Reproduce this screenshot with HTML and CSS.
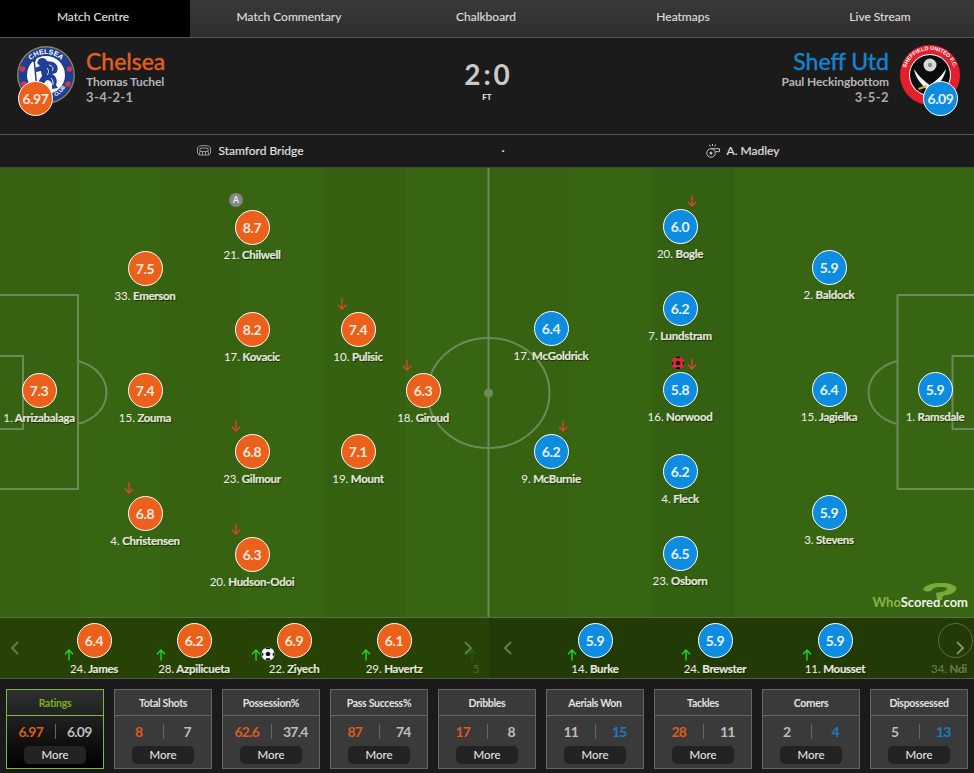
FILE: index.html
```html
<!DOCTYPE html>
<html lang="en">
<head>
<meta charset="utf-8">
<title>Chelsea 2:0 Sheff Utd - Match Centre</title>
<link rel="stylesheet" href="styles.css">
</head>
<body>
<svg class="defs" width="0" height="0" aria-hidden="true">
  <symbol id="down" viewBox="0 0 10 12"><path d="M5 .5V11M1 6.8 5 11l4-4.2" fill="none" stroke="currentColor" stroke-width="1.3"/></symbol>
  <symbol id="up" viewBox="0 0 10 12"><path d="M5 11.5V1M1 5.2 5 1l4 4.2" fill="none" stroke="currentColor" stroke-width="1.4"/></symbol>
  <symbol id="ball" viewBox="0 0 14 14"><circle cx="7" cy="7" r="6.6" fill="currentColor"/><path d="M7 4.4 9.5 6.2 8.5 9.1H5.5L4.5 6.2ZM7 .4V2l-1.8.3L4.5 1ZM7 .4V2l1.8.3L9.5 1ZM.5 6.5 2 5.6l.4 2.4-1.2 1.3ZM13.5 6.5 12 5.6l-.4 2.4 1.2 1.3ZM4.4 12.8l.8-1.6h3.6l.8 1.6L7 13.6Z" fill="#111"/></symbol>
  <symbol id="chev-l" viewBox="0 0 10 14"><path d="M8 1 2 7l6 6" fill="none" stroke="currentColor" stroke-width="2"/></symbol>
  <symbol id="chev-r" viewBox="0 0 10 14"><path d="M2 1l6 6-6 6" fill="none" stroke="currentColor" stroke-width="2"/></symbol>
</svg>

<nav class="tabs">
  <a class="tab tab-active">Match Centre</a>
  <a class="tab">Match Commentary</a>
  <a class="tab">Chalkboard</a>
  <a class="tab">Heatmaps</a>
  <a class="tab">Live Stream</a>
</nav>

<header class="match">
  <div class="team">
    <div class="crest">
      <svg viewBox="0 0 60 60" width="60" height="60">
        <defs><path id="chelsea-arc" d="M9 30a21 21 0 0 1 42 0"/><path id="chelsea-club" d="M20 53a25 25 0 0 0 31-14"/></defs>
        <circle cx="30" cy="30" r="29" fill="#8d8358"/>
        <circle cx="30" cy="30" r="27.600" fill="#1f3f95"/>
        <circle cx="30" cy="30" r="19" fill="#fff"/>
        <text class="crest-text" font-size="7"><textPath href="#chelsea-arc" startOffset="50%" text-anchor="middle">CHELSEA</textPath></text>
        <text class="crest-text" font-size="5"><textPath href="#chelsea-club" startOffset="72%" text-anchor="middle">CLUB</textPath></text>
        <circle cx="6.500" cy="24" r="2.800" fill="#d6324a"/><circle cx="53.500" cy="24" r="2.800" fill="#d6324a"/>
        <circle cx="8" cy="39" r="2.800" fill="#d6324a"/><circle cx="52" cy="39" r="2.800" fill="#d6324a"/>
        <path d="M18 14 21 44" fill="none" stroke="#1f3f95" stroke-width="1.500"/>
        <circle cx="18" cy="15" r="2" fill="#1f3f95"/>
        <path d="M23 14C26 12 30 13 31 16L37 17C42 19 43 25 40 28L36 29C40 31 42 35 40 40L42 43 36 44V39C35 36 33 35 31 35L28 38 30 44H24L22 37 26 31 25 26 20 27 19 23 24 21 21 18Z" fill="#1f3f95"/>
        <path d="M33 20C37 21 38 24 36 26M31 23C33 25 33 28 31 30M35 33C37 35 37 37 37 40" fill="none" stroke="#fff" stroke-width=".9"/>
      </svg>
      <span class="rating rating-home team-rating">6.97</span>
    </div>
    <div class="team-info">
      <h2 class="team-name home-text">Chelsea</h2>
      <div class="manager">Thomas Tuchel</div>
      <div class="formation">3-4-2-1</div>
    </div>
  </div>

  <div class="score">
    <div class="score-value">2 : 0</div>
    <div class="score-status">FT</div>
  </div>

  <div class="team team-away">
    <div class="team-info">
      <h2 class="team-name away-text">Sheff Utd</h2>
      <div class="manager">Paul Heckingbottom</div>
      <div class="formation">3-5-2</div>
    </div>
    <div class="crest">
      <svg viewBox="0 0 60 60" width="60" height="60">
        <defs><path id="sheff-arc" d="M6 36a24.800 24.800 0 1 1 48 0"/></defs>
        <circle cx="30" cy="30" r="30" fill="#e1202c"/>
        <circle cx="30" cy="30" r="21" fill="#fff"/>
        <circle cx="30" cy="30" r="20" fill="#0b0b0b"/>
        <text class="crest-text" font-size="5.500"><textPath href="#sheff-arc" startOffset="50%" text-anchor="middle">SHEFFIELD UNITED F.C.</textPath></text>
        <circle cx="30" cy="20" r="6.500" fill="#d8d8d8"/>
        <circle cx="30" cy="20" r="2.200" fill="#8c8c8c"/>
        <path d="M14 24C15 32 21 39 28 46L32 42C26 37 19 32 14 24ZM46 24C45 32 39 39 32 46L28 42C34 37 41 32 46 24Z" fill="#f2f2f2"/>
        <path d="M18 43l9-3-1 2.500-7 2.500Z" fill="#c9b23a"/>
      </svg>
      <span class="rating rating-away team-rating">6.09</span>
    </div>
  </div>
</header>

<section class="info">
  <div class="info-item">
    <svg class="info-icon" viewBox="0 0 14 11" width="14" height="11"><g fill="none" stroke="#999" stroke-width="1"><path d="M1.500 1.500C4 .3 10 .3 12.500 1.500L13.500 3V8.500L12 10H2L.5 8.500V3Z"/><path d="M3 3.500C5.500 2.800 8.500 2.800 11 3.500V6.500H3ZM3 6.500 2 10M11 6.500 12 10M5.500 6.500V10M8.500 6.500V10"/></g></svg>
    <span>Stamford Bridge</span>
  </div>
  <div class="info-dot">·</div>
  <div class="info-item info-ref">
    <svg class="info-icon" viewBox="0 0 14 14" width="14" height="14"><g fill="none" stroke="#bbb" stroke-width="1"><circle cx="5" cy="9" r="4.300"/><path d="M5 4.700h8.500v3h-4.300"/><path d="M3.500.5l.7 2M6.500 0v2M9.500.5l-.7 2"/></g><circle cx="5" cy="9" r="1.500" fill="#bbb"/></svg>
    <span>A. Madley</span>
  </div>
</section>

<main class="pitch">
  <svg class="pitch-lines" viewBox="0 0 974 449" width="974" height="449">
    <g fill="none" stroke="#6d8a58" stroke-width="2">
      <path d="M488.500 0V449"/>
      <ellipse cx="488.500" cy="225" rx="61" ry="55"/>
      <path d="M-2 127H78V321H-2M-2 188H23V261H-2"/>
      <path d="M78 193C116 203 116 246 78 256"/>
      <path d="M976 127H897.500V321H976M976 188H952.500V261H976"/>
      <path d="M897 193C859 203 859 246 897 256"/>
    </g>
    <circle cx="488.500" cy="225" r="4.500" fill="#6d8a58"/>
  </svg>

  <!-- Chelsea -->
  <div class="pin" style="left:39px;top:223px"><span class="rating rating-home">7.3</span><div class="label"><span class="num">1.</span> Arrizabalaga</div></div>
  <div class="pin" style="left:145px;top:223px"><span class="rating rating-home">7.4</span><div class="label"><span class="num">15.</span> Zouma</div></div>
  <div class="pin" style="left:145px;top:101px"><span class="rating rating-home">7.5</span><div class="label"><span class="num">33.</span> Emerson</div></div>
  <div class="pin" style="left:145px;top:346px"><svg class="mark arrow-down mark-home"><use href="#down"/></svg><span class="rating rating-home">6.8</span><div class="label"><span class="num">4.</span> Christensen</div></div>
  <div class="pin" style="left:252px;top:60px"><span class="captain">A</span><span class="rating rating-home">8.7</span><div class="label"><span class="num">21.</span> Chilwell</div></div>
  <div class="pin" style="left:252px;top:162px"><span class="rating rating-home">8.2</span><div class="label"><span class="num">17.</span> Kovacic</div></div>
  <div class="pin" style="left:252px;top:284px"><svg class="mark arrow-down mark-home"><use href="#down"/></svg><span class="rating rating-home">6.8</span><div class="label"><span class="num">23.</span> Gilmour</div></div>
  <div class="pin" style="left:252px;top:387px"><svg class="mark arrow-down mark-home"><use href="#down"/></svg><span class="rating rating-home">6.3</span><div class="label"><span class="num">20.</span> Hudson-Odoi</div></div>
  <div class="pin" style="left:358px;top:162px"><svg class="mark arrow-down mark-home"><use href="#down"/></svg><span class="rating rating-home">7.4</span><div class="label"><span class="num">10.</span> Pulisic</div></div>
  <div class="pin" style="left:358px;top:284px"><span class="rating rating-home">7.1</span><div class="label"><span class="num">19.</span> Mount</div></div>
  <div class="pin" style="left:423px;top:223px"><svg class="mark arrow-down mark-home"><use href="#down"/></svg><span class="rating rating-home">6.3</span><div class="label"><span class="num">18.</span> Giroud</div></div>

  <!-- Sheffield United -->
  <div class="pin" style="left:551px;top:161px"><span class="rating rating-away">6.4</span><div class="label"><span class="num">17.</span> McGoldrick</div></div>
  <div class="pin" style="left:551px;top:284px"><svg class="mark arrow-down mark-away"><use href="#down"/></svg><span class="rating rating-away">6.2</span><div class="label"><span class="num">9.</span> McBurnie</div></div>
  <div class="pin" style="left:680px;top:59px"><svg class="mark arrow-down mark-away"><use href="#down"/></svg><span class="rating rating-away">6.0</span><div class="label"><span class="num">20.</span> Bogle</div></div>
  <div class="pin" style="left:680px;top:141px"><span class="rating rating-away">6.2</span><div class="label"><span class="num">7.</span> Lundstram</div></div>
  <div class="pin" style="left:680px;top:222px"><svg class="mark ball-red"><use href="#ball"/></svg><svg class="mark arrow-down mark-away"><use href="#down"/></svg><span class="rating rating-away">5.8</span><div class="label"><span class="num">16.</span> Norwood</div></div>
  <div class="pin" style="left:680px;top:304px"><span class="rating rating-away">6.2</span><div class="label"><span class="num">4.</span> Fleck</div></div>
  <div class="pin" style="left:680px;top:386px"><span class="rating rating-away">6.5</span><div class="label"><span class="num">23.</span> Osborn</div></div>
  <div class="pin" style="left:829px;top:100px"><span class="rating rating-away">5.9</span><div class="label"><span class="num">2.</span> Baldock</div></div>
  <div class="pin" style="left:829px;top:222px"><span class="rating rating-away">6.4</span><div class="label"><span class="num">15.</span> Jagielka</div></div>
  <div class="pin" style="left:829px;top:345px"><span class="rating rating-away">5.9</span><div class="label"><span class="num">3.</span> Stevens</div></div>
  <div class="pin" style="left:935px;top:222px"><span class="rating rating-away">5.9</span><div class="label"><span class="num">1.</span> Ramsdale</div></div>

  <div class="brand">
    <svg class="brand-mark" viewBox="0 0 34 17" width="34" height="17"><path d="M0 6C3 1 14-1 22 0 31 1 35 4 33 7 31 11 24 12 20 13L19 17H14L13 10C18 9 24 8 24 6 24 4 20 4 16 4 12 4 9 6 8 8 4 9 0 8 0 6Z" fill="#7aa83c"/></svg>
    <span class="brand-who">Who</span><span>Scored</span><span class="brand-dot">.</span><span>com</span>
  </div>
</main>

<section class="subs">
  <div class="sub-panel sub-panel-home">
    <div class="sub"><svg class="mark arrow-up" style="left:20px"><use href="#up"/></svg><span class="rating rating-home">6.4</span><div class="label"><span class="num">24.</span> James</div></div>
    <div class="sub"><svg class="mark arrow-up" style="left:12px"><use href="#up"/></svg><span class="rating rating-home">6.2</span><div class="label"><span class="num">28.</span> Azpilicueta</div></div>
    <div class="sub"><svg class="mark arrow-up" style="left:7px"><use href="#up"/></svg><svg class="mark ball-white"><use href="#ball"/></svg><span class="rating rating-home">6.9</span><div class="label"><span class="num">22.</span> Ziyech</div></div>
    <div class="sub"><svg class="mark arrow-up" style="left:17px"><use href="#up"/></svg><span class="rating rating-home">6.1</span><div class="label"><span class="num">29.</span> Havertz</div></div>
    <div class="sub-peek"><svg class="mark arrow-up" style="left:0"><use href="#up"/></svg><div class="peek-num">5</div></div>
    <svg class="chevron chevron-1"><use href="#chev-l"/></svg>
    <svg class="chevron chevron-2"><use href="#chev-r"/></svg>
  </div>
  <div class="sub-panel sub-panel-away">
    <div class="sub sub-wide"><svg class="mark arrow-up" style="left:32px"><use href="#up"/></svg><span class="rating rating-away">5.9</span><div class="label"><span class="num">14.</span> Burke</div></div>
    <div class="sub sub-wide"><svg class="mark arrow-up" style="left:26px"><use href="#up"/></svg><span class="rating rating-away">5.9</span><div class="label"><span class="num">24.</span> Brewster</div></div>
    <div class="sub sub-wide"><svg class="mark arrow-up" style="left:27px"><use href="#up"/></svg><span class="rating rating-away">5.9</span><div class="label"><span class="num">11.</span> Mousset</div></div>
    <div class="sub sub-wide sub-empty"><span class="rating rating-none"></span><div class="label label-peek"><span class="num">34.</span> Ndi</div></div>
    <svg class="chevron chevron-3"><use href="#chev-l"/></svg>
    <svg class="chevron chevron-4"><use href="#chev-r"/></svg>
  </div>
</section>

<section class="stats">
  <article class="stat stat-active">
    <h3 class="stat-title">Ratings</h3>
    <div class="stat-values"><span class="home-val">6.97</span><i></i><span>6.09</span></div>
    <button class="more">More</button>
  </article>
  <article class="stat">
    <h3 class="stat-title">Total Shots</h3>
    <div class="stat-values"><span class="home-val">8</span><i></i><span>7</span></div>
    <button class="more">More</button>
  </article>
  <article class="stat">
    <h3 class="stat-title">Possession%</h3>
    <div class="stat-values"><span class="home-val">62.6</span><i></i><span>37.4</span></div>
    <button class="more">More</button>
  </article>
  <article class="stat">
    <h3 class="stat-title">Pass Success%</h3>
    <div class="stat-values"><span class="home-val">87</span><i></i><span>74</span></div>
    <button class="more">More</button>
  </article>
  <article class="stat">
    <h3 class="stat-title">Dribbles</h3>
    <div class="stat-values"><span class="home-val">17</span><i></i><span>8</span></div>
    <button class="more">More</button>
  </article>
  <article class="stat">
    <h3 class="stat-title">Aerials Won</h3>
    <div class="stat-values"><span>11</span><i></i><span class="away-val">15</span></div>
    <button class="more">More</button>
  </article>
  <article class="stat">
    <h3 class="stat-title">Tackles</h3>
    <div class="stat-values"><span class="home-val">28</span><i></i><span>11</span></div>
    <button class="more">More</button>
  </article>
  <article class="stat">
    <h3 class="stat-title">Corners</h3>
    <div class="stat-values"><span>2</span><i></i><span class="away-val">4</span></div>
    <button class="more">More</button>
  </article>
  <article class="stat">
    <h3 class="stat-title">Dispossessed</h3>
    <div class="stat-values"><span>5</span><i></i><span class="away-val">13</span></div>
    <button class="more">More</button>
  </article>
</section>
</body>
</html>
```

FILE: styles.css
```css
* { box-sizing: border-box; }
html, body { margin: 0; padding: 0; }
body {
  width: 974px;
  height: 773px;
  overflow: hidden;
  background: #1a1a1a;
  color: #fff;
  font-family: Lato, "Open Sans", "Liberation Sans", sans-serif;
}
.defs { position: absolute; }

/* Tabs */
.tabs {
  display: grid;
  grid-template-columns: 190px repeat(4, 197px);
  height: 38px;
  background: linear-gradient(#393939, #2e2e2e);
  border-bottom: 1px solid #555;
  overflow: hidden;
}
.tab {
  display: flex;
  align-items: center;
  justify-content: center;
  font-size: 12px;
  color: #ddd;
  padding: 0 0 5px 1px;
  -webkit-text-stroke: .15px currentColor;
}
.tab-active { background: #000; color: #ddd; padding: 0 4px 5px 0; }

/* Match header */
.match {
  display: grid;
  grid-template-columns: 1fr auto 1fr;
  height: 97px;
  background: #1b1b1b;
  border-bottom: 1px solid #555;
}
.team { display: flex; padding: 7px 0 0 16px; gap: 10px; }
.team-away { justify-content: flex-end; padding: 7px 14px 0 0; gap: 11px; }
.team-away .team-info { text-align: right; }
.team-info { padding-top: 3px; }
.crest { position: relative; width: 60px; height: 60px; }
.crest svg { display: block; }
.crest-text { fill: #fff; font-family: "Liberation Sans", sans-serif; font-weight: 700; }
.team-rating { position: absolute; left: 2px; top: 36px; font-size: 12px; letter-spacing: -.8px; }
.team-away .team-rating { left: 23px; top: 36px; }
.team-name {
  margin: 0;
  font-size: 23px;
  line-height: 26px;
  font-weight: 400;
  -webkit-text-stroke: .4px currentColor;
}
.home-text { color: #e4601f; }
.away-text { color: #1684d0; }
.manager {
  font-size: 12px;
  line-height: 15px;
  font-weight: 700;
  color: #b5b5b5;
  letter-spacing: -.1px;
}
.formation {
  font-size: 13px;
  line-height: 17px;
  font-weight: 700;
  color: #aaa;
  letter-spacing: .4px;
}
.score { text-align: center; padding-top: 20px; }
.score-value {
  font-size: 28px;
  line-height: 32px;
  font-weight: 700;
  color: #c9c9c9;
  word-spacing: -4px;
}
.score-status { font-size: 8px; line-height: 9px; font-weight: 700; color: #eee; margin-top: 3px; }

/* Venue and referee */
.info {
  display: grid;
  grid-template-columns: 501px 4px 1fr;
  height: 33px;
  padding-bottom: 1px;
  background: #1b1b1b;
  border-bottom: 1px solid #444;
  align-items: center;
  font-size: 12px;
  color: #e2e2e2;
  -webkit-text-stroke: .15px currentColor;
}
.info-item { display: flex; align-items: center; justify-content: center; gap: 7px; }
.info-ref { padding-left: 6px; }
.info-dot { text-align: center; }
.info-icon { display: block; flex: none; }

/* Pitch */
.pitch {
  position: relative;
  height: 450px;
  border-bottom: 1px solid #5d6f50;
  background:
    linear-gradient(90deg,
      #366211 0 78px, #386511 78px 160px, #366211 160px 242px, #386511 242px 324px,
      #356111 324px 406px, #386511 406px 488px, #366211 488px 570px, #386511 570px 652px,
      #346011 652px 734px, #386511 734px 974px);
  overflow: hidden;
}
.pitch-lines { position: absolute; left: 0; top: 0; }

/* Players */
.pin {
  position: absolute;
  width: 140px;
  margin: -18px 0 0 -70px;
  display: flex;
  flex-direction: column;
  align-items: center;
}
.rating {
  flex: none;
  display: flex;
  align-items: center;
  justify-content: center;
  width: 35px;
  height: 35px;
  border: 1px solid #fff;
  border-radius: 50%;
  font-size: 14px;
  font-weight: 700;
  color: #fbe9df;
  letter-spacing: -.4px;
}
.rating-home { background: #eb601b; }
.rating-away { background: #0e8de0; color: #e4f3fc; }
.rating-none { background: transparent; border-color: rgba(255, 255, 255, .6); }
.label {
  margin-top: 3px;
  font-size: 11.500px;
  line-height: 14px;
  font-weight: 700;
  color: #e2e8dc;
  white-space: nowrap;
  letter-spacing: -.3px;
  text-shadow: 1px 1px 1px rgba(0, 0, 0, .55);
  -webkit-text-stroke: .2px currentColor;
}
.num { font-weight: 400; color: #eee; letter-spacing: 0; text-shadow: none; -webkit-text-stroke: 0; }
.mark { position: absolute; display: block; }
.arrow-down { width: 10px; height: 12px; top: -14px; color: #e2452b; }
.mark-home { left: 49px; }
.mark-away { left: 77px; }
.ball-red { width: 14px; height: 14px; left: 61px; top: -16px; color: #d9293a; }
.captain {
  position: absolute;
  left: 47px;
  top: -17px;
  width: 14px;
  height: 14px;
  border-radius: 50%;
  background: #85858a;
  color: #eee;
  font-size: 9px;
  line-height: 14px;
  font-weight: 700;
  text-align: center;
}
.brand {
  position: absolute;
  right: 6px;
  bottom: 7px;
  font-size: 13px;
  line-height: 16px;
  font-weight: 700;
  color: #eef2e8;
  white-space: nowrap;
}
.brand-who { color: #86b545; }
.brand-dot { color: #86b545; }
.brand-mark { position: absolute; right: 11px; top: -11px; }

/* Substitutes */
.subs {
  display: grid;
  grid-template-columns: 489px 485px;
  height: 61px;
  border-bottom: 1px solid #555;
  overflow: hidden;
}
.sub-panel { position: relative; display: flex; overflow: hidden; padding-top: 5px; }
.sub-panel-home { background: #264204; padding-left: 44px; }
.sub-panel-away { background: #223a05; padding-left: 46px; }
.sub {
  position: relative;
  flex: none;
  width: 100px;
  display: flex;
  flex-direction: column;
  align-items: center;
}
.sub-wide { width: 120px; }
.sub .label { margin-top: 4px; }
.sub-empty .rating { opacity: .4; }
.sub-empty .label { opacity: .35; }
.sub .label-peek { align-self: flex-start; margin-left: 36px; }
.sub-peek { position: relative; flex: none; width: 12px; margin-left: 23px; opacity: .2; }
.peek-num { margin: 39px 0 0 6px; font-size: 11px; line-height: 14px; }
.arrow-up { width: 10px; height: 12px; top: 26px; color: #1fdc1f; }
.ball-white { width: 14px; height: 14px; left: 17px; top: 24px; color: #f4f4f4; }
.chevron { position: absolute; width: 10px; height: 14px; top: 23px; color: #5f7c48; }
.chevron-1 { left: 10px; }
.chevron-2 { left: 463px; }
.chevron-3 { left: 14px; }
.chevron-4 { left: 466px; color: #7b9366; }

/* Stat cards */
.stats {
  display: flex;
  gap: 10px;
  padding: 10px 0 0 6px;
  height: 94px;
  background: #1a1a1a;
}
.stat {
  flex: none;
  width: 98px;
  height: 80px;
  display: flex;
  flex-direction: column;
  align-items: center;
  border: 1px solid #666;
  background: #3a3a3a;
}
.stat-title {
  width: 100%;
  height: 26px;
  margin: 0;
  border-bottom: 1px solid #666;
  font-size: 10.500px;
  line-height: 26px;
  font-weight: 700;
  color: #e2e2e2;
  text-align: center;
  letter-spacing: -.3px;
}
.stat-values {
  display: grid;
  grid-template-columns: 1fr 1px 1fr;
  align-items: center;
  width: 100%;
  height: 30px;
  font-size: 14px;
  font-weight: 700;
  color: #bdbdbd;
  text-align: center;
  letter-spacing: -.8px;
}
.stat-values i { display: block; width: 1px; height: 15px; background: #666; }
.home-val { color: #dc5c1e; }
.away-val { color: #1a7cc4; }
.more {
  width: 62px;
  height: 18px;
  padding: 0;
  border: 0;
  border-radius: 5px;
  background: #232323;
  color: #eee;
  font: 400 11.500px/18px Lato, sans-serif;
}
.stat-active {
  border-color: #7dba3c;
  background: linear-gradient(#303030, #000);
}
.stat-active .stat-title { color: #77b21c; border-color: #7dba3c; }
```
